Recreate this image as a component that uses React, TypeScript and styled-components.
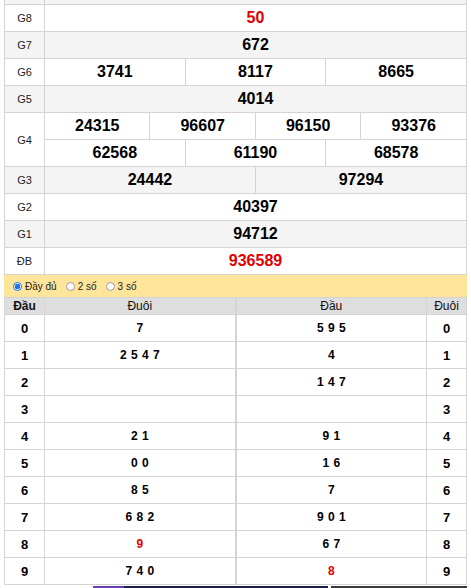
import React from "react";
import styled, { createGlobalStyle } from "styled-components";

const Global = createGlobalStyle`
  html, body { margin: 0; padding: 0; background: #fff; }
  body { font-family: "Liberation Sans", Arial, sans-serif; color: #000; overflow: hidden; }
`;

const Page = styled.div`
  padding: 0 0 0 4px;
  width: 463px;
  margin-top: -23px;
`;

const PrizeTable = styled.table`
  width: 463px;
  border-collapse: collapse;
  table-layout: fixed;
`;

const Row = styled.tr<{ $alt?: boolean }>`
  background: ${(p) => (p.$alt ? "#f4f4f4" : "#fff")};
`;

const Label = styled.td`
  border: 1px solid #d4d4d4;
  height: 26px;
  padding: 0;
  text-align: center;
  font-size: 11px;
  color: #222;
`;

const Num = styled.td<{ $red?: boolean }>`
  border: 1px solid #d4d4d4;
  height: 26px;
  padding: 0;
  text-align: center;
  font-size: 16px;
  font-weight: bold;
  color: ${(p) => (p.$red ? "#e30000" : "#000")};
`;

const OptionBar = styled.div`
  display: flex;
  align-items: center;
  gap: 9px;
  height: 22px;
  padding-left: 9px;
  background: #ffe59a;
  font-size: 10px;
  color: #222;
`;

const Option = styled.label`
  display: flex;
  align-items: center;
  gap: 3px;
`;

const Radio = styled.span<{ $on?: boolean }>`
  width: 9px;
  height: 9px;
  border-radius: 50%;
  box-sizing: border-box;
  border: 1px solid ${(p) => (p.$on ? "#1a73e8" : "#999")};
  background: ${(p) => (p.$on ? "radial-gradient(circle, #1a73e8 0 2.5px, #fff 3px)" : "#fff")};
`;

const LotoWrap = styled.div`
  display: flex;
`;

const LotoTable = styled.table`
  flex: 1;
  border-collapse: collapse;
  table-layout: fixed;
`;

const Head = styled.th`
  background: #dedede;
  border: 1px solid #d4d4d4;
  height: 16px;
  padding: 0;
  font-size: 12px;
  font-weight: normal;
  color: #111;
`;

const Key = styled.td`
  border: 1px solid #d4d4d4;
  height: 26px;
  padding: 0;
  text-align: center;
  font-size: 13px;
  font-weight: bold;
`;

const Vals = styled.td<{ $red?: boolean }>`
  border: 1px solid #d4d4d4;
  height: 26px;
  padding: 0;
  text-align: center;
  font-size: 12px;
  font-weight: bold;
  word-spacing: 1px;
  color: ${(p) => (p.$red ? "#e30000" : "#000")};
`;

const AdStrip = styled.div`
  display: flex;
  height: 3px;
  margin-top: 1px;
  padding-left: 89px;
`;

const Ad = styled.div<{ $w: number; $bg: string; $ml?: number }>`
  width: ${(p) => p.$w}px;
  margin-left: ${(p) => p.$ml ?? 0}px;
  background: ${(p) => p.$bg};
`;

const cols = Array.from({ length: 12 });

const left: [string, string, boolean?][] = [
  ["0", "7"],
  ["1", "2 5 4 7"],
  ["2", ""],
  ["3", ""],
  ["4", "2 1"],
  ["5", "0 0"],
  ["6", "8 5"],
  ["7", "6 8 2"],
  ["8", "9", true],
  ["9", "7 4 0"],
];

const right: [string, string, boolean?][] = [
  ["5 9 5", "0"],
  ["4", "1"],
  ["1 4 7", "2"],
  ["", "3"],
  ["9 1", "4"],
  ["1 6", "5"],
  ["7", "6"],
  ["9 0 1", "7"],
  ["6 7", "8"],
  ["8", "9", true],
];

export default function App() {
  return (
    <>
      <Global />
      <Page>
        <PrizeTable>
          <colgroup>
            <col style={{ width: 40 }} />
            {cols.map((_, i) => (
              <col key={i} />
            ))}
          </colgroup>
          <tbody>
            <Row $alt>
              <Label />
              <Num colSpan={12} />
            </Row>
            <Row>
              <Label>G8</Label>
              <Num colSpan={12} $red>50</Num>
            </Row>
            <Row $alt>
              <Label>G7</Label>
              <Num colSpan={12}>672</Num>
            </Row>
            <Row>
              <Label>G6</Label>
              <Num colSpan={4}>3741</Num>
              <Num colSpan={4}>8117</Num>
              <Num colSpan={4}>8665</Num>
            </Row>
            <Row $alt>
              <Label>G5</Label>
              <Num colSpan={12}>4014</Num>
            </Row>
            <Row>
              <Label rowSpan={2}>G4</Label>
              <Num colSpan={3}>24315</Num>
              <Num colSpan={3}>96607</Num>
              <Num colSpan={3}>96150</Num>
              <Num colSpan={3}>93376</Num>
            </Row>
            <Row>
              <Num colSpan={4}>62568</Num>
              <Num colSpan={4}>61190</Num>
              <Num colSpan={4}>68578</Num>
            </Row>
            <Row $alt>
              <Label>G3</Label>
              <Num colSpan={6}>24442</Num>
              <Num colSpan={6}>97294</Num>
            </Row>
            <Row>
              <Label>G2</Label>
              <Num colSpan={12}>40397</Num>
            </Row>
            <Row $alt>
              <Label>G1</Label>
              <Num colSpan={12}>94712</Num>
            </Row>
            <Row>
              <Label>ĐB</Label>
              <Num colSpan={12} $red>936589</Num>
            </Row>
          </tbody>
        </PrizeTable>
        <OptionBar>
          <Option>
            <Radio $on />
            Đầy đủ
          </Option>
          <Option>
            <Radio />2 số
          </Option>
          <Option>
            <Radio />3 số
          </Option>
        </OptionBar>
        <LotoWrap>
          <LotoTable>
            <colgroup>
              <col style={{ width: 40 }} />
              <col />
            </colgroup>
            <thead>
              <tr>
                <Head style={{ fontWeight: "bold" }}>Đầu</Head>
                <Head>Đuôi</Head>
              </tr>
            </thead>
            <tbody>
              {left.map(([k, v, red]) => (
                <tr key={k}>
                  <Key>{k}</Key>
                  <Vals $red={red}>{v}</Vals>
                </tr>
              ))}
            </tbody>
          </LotoTable>
          <LotoTable>
            <colgroup>
              <col />
              <col style={{ width: 40 }} />
            </colgroup>
            <thead>
              <tr>
                <Head>Đầu</Head>
                <Head>Đuôi</Head>
              </tr>
            </thead>
            <tbody>
              {right.map(([v, k, red]) => (
                <tr key={k}>
                  <Vals $red={red}>{v}</Vals>
                  <Key>{k}</Key>
                </tr>
              ))}
            </tbody>
          </LotoTable>
        </LotoWrap>
        <AdStrip>
          <Ad $w={31} $bg="#6a3fb5" />
          <Ad $w={204} $bg="#1c1f4a" />
          <Ad $w={136} $ml={3} $bg="#3a3a3a" />
        </AdStrip>
      </Page>
    </>
  );
}
